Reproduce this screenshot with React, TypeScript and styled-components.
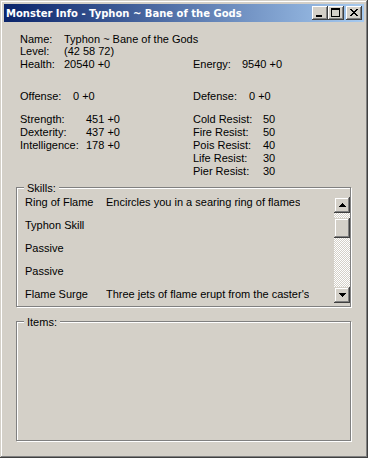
import React from "react";
import styled, { createGlobalStyle } from "styled-components";

interface ISkill {
  name: string;
  desc: string;
}

interface IStat {
  label: string;
  value: string;
  labelWidth: number;
}

interface IInfoRow {
  gap: number;
  left?: IStat;
  right?: IStat;
}

const skills: Array<ISkill> = [
  { name: "Ring of Flame", desc: "Encircles you in a searing ring of flames" },
  { name: "Typhon Skill", desc: "" },
  { name: "Passive", desc: "" },
  { name: "Passive", desc: "" },
  { name: "Flame Surge", desc: "Three jets of flame erupt from the caster's" },
];

const infoRows: Array<IInfoRow> = [
  { gap: 0, left: { label: "Name:", value: "Typhon ~ Bane of the Gods", labelWidth: 44 } },
  { gap: -1, left: { label: "Level:", value: "(42 58 72)", labelWidth: 44 } },
  {
    gap: 0,
    left: { label: "Health:", value: "20540 +0", labelWidth: 44 },
    right: { label: "Energy:", value: "9540 +0", labelWidth: 49 },
  },
  {
    gap: 19,
    left: { label: "Offense:", value: "0 +0", labelWidth: 53 },
    right: { label: "Defense:", value: "0 +0", labelWidth: 56 },
  },
  {
    gap: 10,
    left: { label: "Strength:", value: "451 +0", labelWidth: 66 },
    right: { label: "Cold Resist:", value: "50", labelWidth: 70 },
  },
  {
    gap: 0,
    left: { label: "Dexterity:", value: "437 +0", labelWidth: 66 },
    right: { label: "Fire Resist:", value: "50", labelWidth: 70 },
  },
  {
    gap: 0,
    left: { label: "Intelligence:", value: "178 +0", labelWidth: 66 },
    right: { label: "Pois Resist:", value: "40", labelWidth: 70 },
  },
  { gap: 0, right: { label: "Life Resist:", value: "30", labelWidth: 70 } },
  { gap: 0, right: { label: "Pier Resist:", value: "30", labelWidth: 70 } },
];

const GlobalStyle = createGlobalStyle`
  html, body {
    margin: 0;
    padding: 0;
    background: #d4d0c8;
  }

  body {
    font-family: "Liberation Sans", Arial, sans-serif;
    font-size: 11px;
    color: #000;
  }
`;

const Window = styled.div`
  width: 368px;
  height: 458px;
  box-sizing: border-box;
  padding: 4px;
  display: flex;
  flex-direction: column;
  background: #d4d0c8;
  box-shadow: inset -1px -1px #404040, inset 1px 1px #d4d0c8,
    inset -2px -2px #808080, inset 2px 2px #ffffff;
`;

const TitleBar = styled.div`
  height: 18px;
  margin-bottom: 1px;
  padding: 0 2px;
  display: flex;
  align-items: center;
  background: linear-gradient(to right, #0a246a, #a6caf0);

  h1 {
    flex: 1;
    margin: 0;
    color: #fff;
    font-family: "DejaVu Sans", Tahoma, sans-serif;
    font-weight: bold;
    font-size: 10px;
    white-space: nowrap;
  }
`;

const CaptionButton = styled.button<{ $gapLeft?: number }>`
  width: 16px;
  height: 14px;
  margin: 0 0 0 ${(p) => p.$gapLeft ?? 0}px;
  padding: 0;
  border: none;
  display: flex;
  align-items: flex-start;
  justify-content: flex-start;
  background: #d4d0c8;
  box-shadow: inset -1px -1px #404040, inset 1px 1px #ffffff,
    inset -2px -2px #808080, inset 2px 2px #d4d0c8;

  svg {
    display: block;
  }
`;

const Body = styled.div`
  flex: 1;
  padding: 10px 13px 0 12px;
  display: flex;
  flex-direction: column;
`;

const Info = styled.div`
  padding-left: 4px;
`;

const Row = styled.div<{ $gap: number }>`
  display: grid;
  grid-template-columns: 173px 1fr;
  height: 13px;
  line-height: 13px;
  margin-top: ${(p) => p.$gap}px;
`;

const Stat = styled.div<{ $labelWidth: number }>`
  display: flex;
  white-space: nowrap;

  .label {
    flex: none;
    width: ${(p) => p.$labelWidth}px;
  }
`;

const GroupBox = styled.div<{ $gap: number }>`
  position: relative;
  height: 120px;
  box-sizing: border-box;
  margin-top: ${(p) => p.$gap}px;
  border: 1px solid #808080;
  box-shadow: inset 1px 1px #ffffff, 1px 1px #ffffff;
  padding: 8px 0 0 5px;
  display: flex;
`;

const GroupLabel = styled.span`
  position: absolute;
  top: -6px;
  left: 7px;
  padding: 0 3px;
  line-height: 13px;
  background: #d4d0c8;
`;

const SkillList = styled.ul`
  flex: 1;
  min-width: 0;
  height: 109px;
  margin: 0;
  padding: 0;
  list-style: none;
  overflow: hidden;
`;

const SkillRow = styled.li`
  height: 23px;
  display: flex;
  line-height: 13px;
  white-space: nowrap;

  .name {
    flex: none;
    width: 81px;
    padding-left: 3px;
  }

  .desc {
    overflow: hidden;
  }
`;

const ScrollBar = styled.div`
  width: 16px;
  height: 106px;
  margin-top: 1px;
  display: flex;
  flex-direction: column;
`;

const ScrollButton = styled.div`
  width: 16px;
  height: 16px;
  flex: none;
  display: flex;
  align-items: center;
  justify-content: center;
  background: #d4d0c8;
  box-shadow: inset -1px -1px #404040, inset 1px 1px #d4d0c8,
    inset -2px -2px #808080, inset 2px 2px #ffffff;
`;

const Track = styled.div`
  flex: 1;
  padding-top: 5px;
  background-image: conic-gradient(
    #ffffff 25%,
    #d4d0c8 0 50%,
    #ffffff 0 75%,
    #d4d0c8 0
  );
  background-size: 2px 2px;
`;

const Thumb = styled.div`
  width: 16px;
  height: 20px;
  background: #d4d0c8;
  box-shadow: inset -1px -1px #404040, inset 1px 1px #d4d0c8,
    inset -2px -2px #808080, inset 2px 2px #ffffff;
`;

const Arrow = ({ down }: { down?: boolean }) => (
  <svg width="7" height="4" viewBox="0 0 7 4" shapeRendering="crispEdges">
    <path
      d={
        down
          ? "M0 0h7v1H0zM1 1h5v1H1zM2 2h3v1H2zM3 3h1v1H3z"
          : "M3 0h1v1H3zM2 1h3v1H2zM1 2h5v1H1zM0 3h7v1H0z"
      }
      fill="#000"
    />
  </svg>
);

const MinGlyph = () => (
  <svg width="16" height="14" viewBox="0 0 16 14" shapeRendering="crispEdges">
    <rect x="4" y="9" width="6" height="2" fill="#000" />
  </svg>
);

const MaxGlyph = () => (
  <svg width="16" height="14" viewBox="0 0 16 14" shapeRendering="crispEdges">
    <path d="M3 2h9v2H3zM3 4h1v7H3zM11 4h1v7h-1zM3 10h9v1H3z" fill="#000" />
  </svg>
);

const CloseGlyph = () => (
  <svg width="16" height="14" viewBox="0 0 16 14" shapeRendering="crispEdges">
    <path
      d="M4 3h2v1H4zM10 3h2v1h-2zM5 4h2v1H5zM9 4h2v1H9zM6 5h4v1H6zM7 6h2v1H7zM6 7h4v1H6zM5 8h2v1H5zM9 8h2v1H9zM4 9h2v1H4zM10 9h2v1h-2z"
      fill="#000"
    />
  </svg>
);

const StatCell = ({ stat }: { stat?: IStat }) =>
  stat ? (
    <Stat $labelWidth={stat.labelWidth}>
      <span className="label">{stat.label}</span>
      <span>{stat.value}</span>
    </Stat>
  ) : (
    <div />
  );

const App = () => {
  return (
    <>
      <GlobalStyle />
      <Window>
        <TitleBar>
          <h1>Monster Info - Typhon ~ Bane of the Gods</h1>
          <CaptionButton aria-label="Minimize">
            <MinGlyph />
          </CaptionButton>
          <CaptionButton aria-label="Maximize">
            <MaxGlyph />
          </CaptionButton>
          <CaptionButton aria-label="Close" $gapLeft={2}>
            <CloseGlyph />
          </CaptionButton>
        </TitleBar>

        <Body>
          <Info>
            {infoRows.map((row, index) => (
              <Row key={index} $gap={row.gap}>
                <StatCell stat={row.left} />
                <StatCell stat={row.right} />
              </Row>
            ))}
          </Info>

          <GroupBox $gap={9}>
            <GroupLabel>Skills:</GroupLabel>
            <SkillList>
              {skills.map(({ name, desc }, index) => (
                <SkillRow key={`${name}${index}`}>
                  <span className="name">{name}</span>
                  <span className="desc">{desc}</span>
                </SkillRow>
              ))}
            </SkillList>
            <ScrollBar>
              <ScrollButton>
                <Arrow />
              </ScrollButton>
              <Track>
                <Thumb />
              </Track>
              <ScrollButton>
                <Arrow down />
              </ScrollButton>
            </ScrollBar>
          </GroupBox>

          <GroupBox $gap={14}>
            <GroupLabel>Items:</GroupLabel>
          </GroupBox>
        </Body>
      </Window>
    </>
  );
};

export default App;
